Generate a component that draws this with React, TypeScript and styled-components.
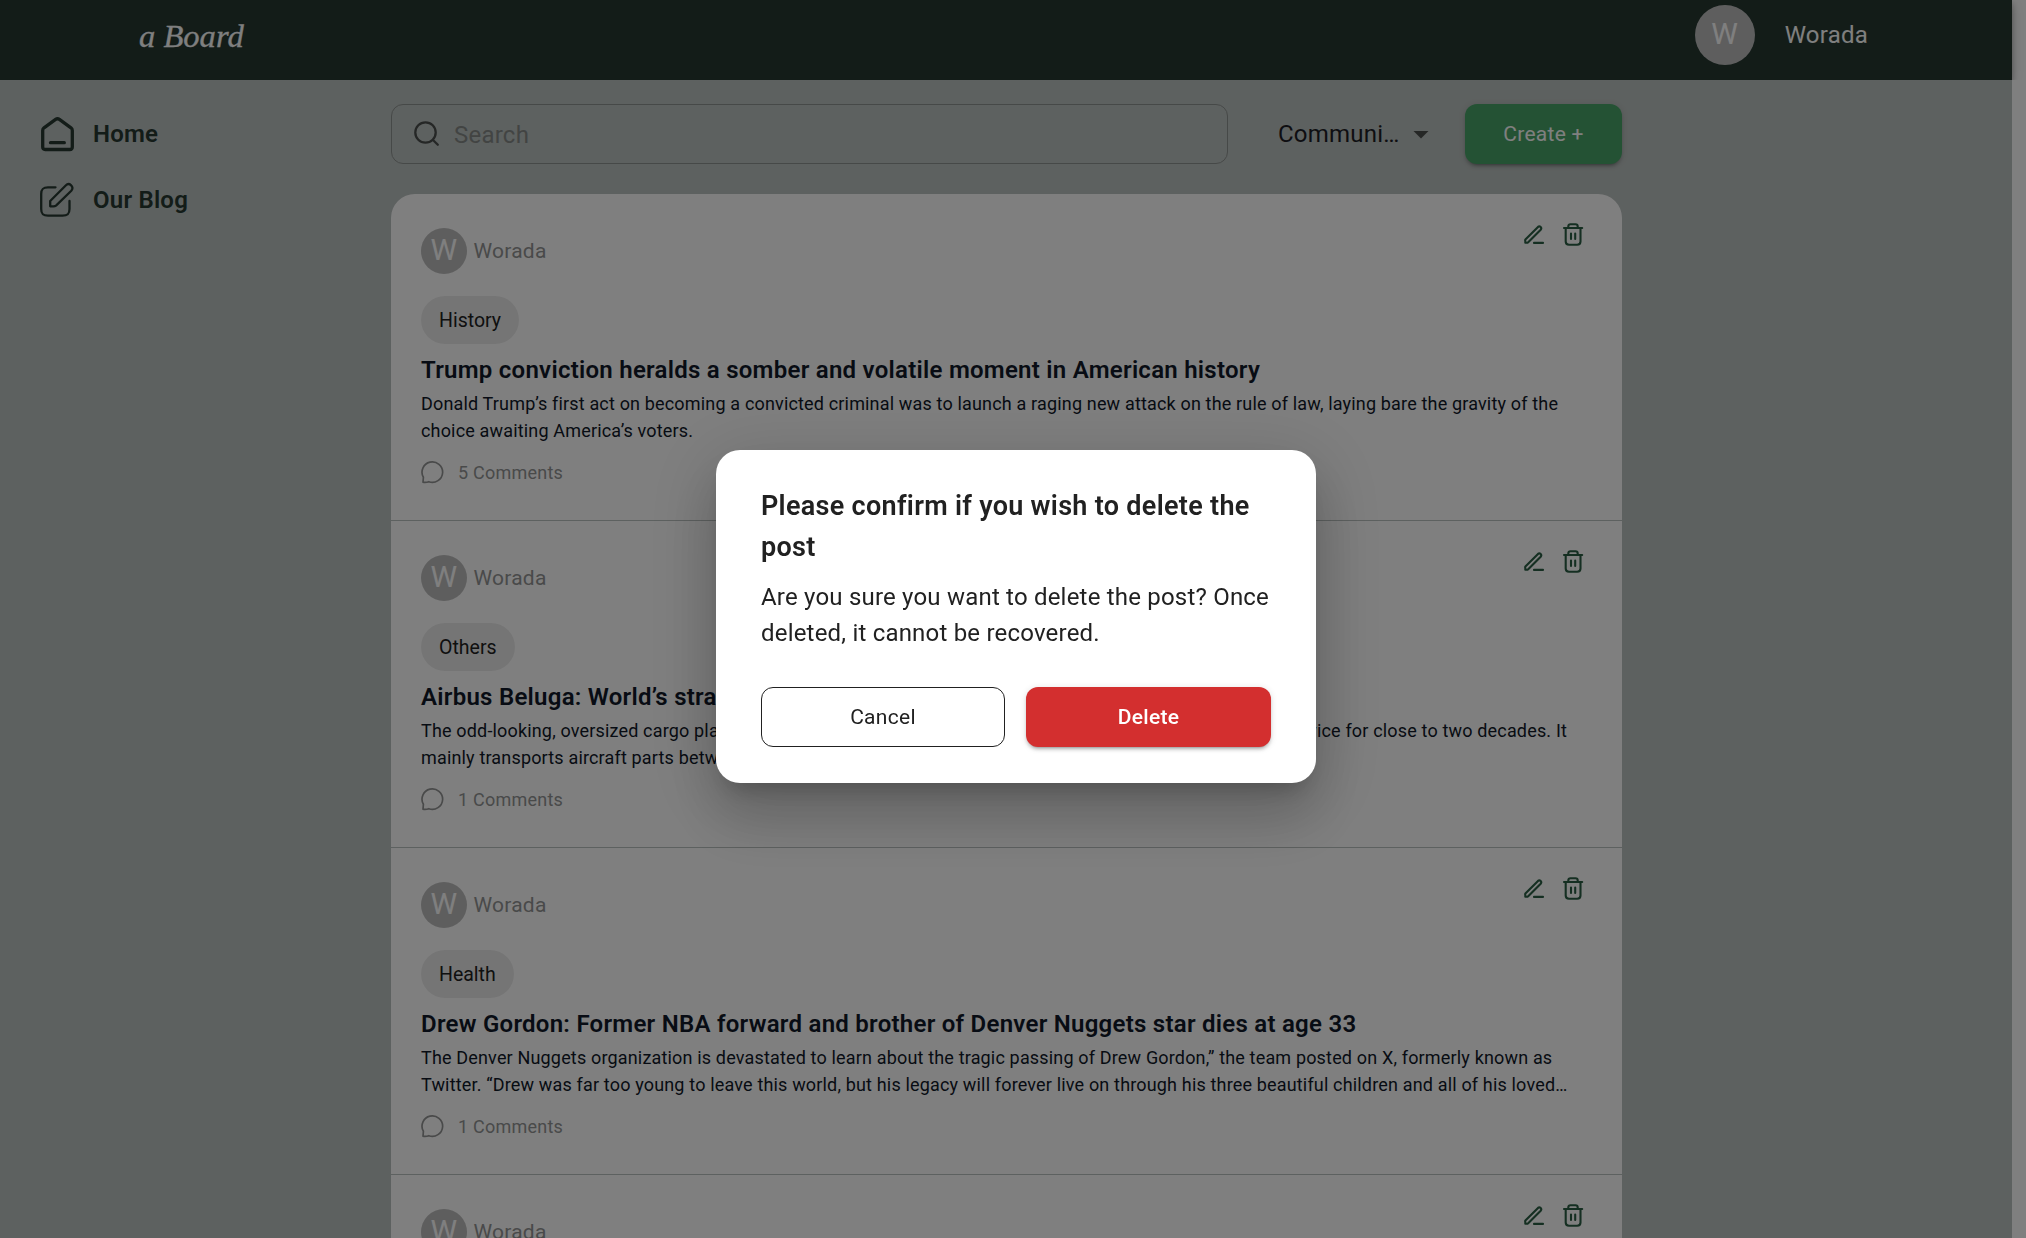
import React from "react";
import styled, { createGlobalStyle } from "styled-components";

const GlobalStyle = createGlobalStyle`
  *, *::before, *::after { box-sizing: border-box; }
  body {
    margin: 0;
    height: 1238px;
    overflow: hidden;
    background: #fff;
    font-family: Roboto, "Liberation Sans", sans-serif;
    font-size: 24px;
    line-height: 1.5;
    letter-spacing: 0.00938em;
  }
  h1, h2, p { margin: 0; }
  svg { display: block; flex: none; }
`;

const Page = styled.div`
  width: 2012px;
  height: 1238px;
  background: #bbc2c0;
`;

const Header = styled.header`
  height: 80px;
  padding: 0 144px 10px 139px;
  display: flex;
  align-items: center;
  justify-content: space-between;
  background: #263831;
  color: #fff;
  box-shadow: 0 3px 6px rgba(0, 0, 0, 0.2), 0 6px 8px rgba(0, 0, 0, 0.14), 0 2px 15px rgba(0, 0, 0, 0.12);
  clip-path: inset(0 -20px 0 0);
`;

const Logo = styled.span`
  padding-top: 2px;
  font-family: "Liberation Serif", serif;
  font-style: italic;
  font-size: 32.6px;
  line-height: 40px;
  letter-spacing: 0;
  -webkit-text-stroke: 0.3px currentColor;
`;

const Account = styled.div`
  display: flex;
  align-items: center;
  gap: 30px;
`;

const Avatar = styled.span<{ $size: number }>`
  width: ${(p) => p.$size}px;
  height: ${(p) => p.$size}px;
  padding-bottom: 2px;
  border-radius: 50%;
  display: flex;
  align-items: center;
  justify-content: center;
  flex: none;
  background: #bdbdbd;
  color: #fff;
  font-size: 30px;
  line-height: 1;
`;

const Body = styled.div`
  display: grid;
  grid-template-columns: 391px 1231px;
  height: 1158px;
  overflow: hidden;
`;

const Nav = styled.nav`
  padding: 36px 0 0 39px;
  display: flex;
  flex-direction: column;
  gap: 30px;
`;

const NavItem = styled.a`
  display: flex;
  align-items: center;
  gap: 18px;
  height: 36px;
  color: #263831;
  font-weight: 600;
`;

const Main = styled.main`
  padding-top: 24px;
`;

const Toolbar = styled.div`
  display: flex;
  align-items: center;
  height: 60px;
  margin-bottom: 30px;
`;

const SearchBox = styled.div`
  width: 837px;
  height: 60px;
  border: 1px solid #8d9290;
  border-radius: 12px;
  padding-left: 21px;
  display: flex;
  align-items: center;
  gap: 13px;
  color: #858987;

  span { padding-top: 1px; }
`;

const Select = styled.div`
  width: 237px;
  padding-left: 50px;
  display: flex;
  align-items: center;
  color: #1d1d25;
`;

const SelectLabel = styled.span`
  width: 125px;
`;

const CreateButton = styled.button`
  width: 157px;
  height: 60px;
  border: 0;
  border-radius: 12px;
  background: #49a569;
  color: #fff;
  font: 450 21px/36px Roboto, sans-serif;
  letter-spacing: 0.25px;
  box-shadow: 0 4px 2px -3px rgba(0, 0, 0, 0.2), 0 3px 3px rgba(0, 0, 0, 0.14), 0 1px 7px rgba(0, 0, 0, 0.12);
`;

const PostList = styled.section`
  background: #fff;
  border-radius: 24px 24px 0 0;
  overflow: hidden;
`;

const Post = styled.article`
  height: 327px;
  padding: 33px 30px 0;
  border-bottom: 1px solid #bbc2c0;
`;

const PostTop = styled.div`
  display: flex;
  justify-content: space-between;
  height: 47px;
`;

const Author = styled.div`
  display: flex;
  align-items: center;
  gap: 6.5px;
  color: #939494;
  font-size: 21px;
`;

const AuthorName = styled.span`
  padding-top: 2px;
`;

const Actions = styled.div`
  display: flex;
  gap: 15px;
  height: 24px;
  margin: -5px 7px 0 0;
`;

const Chip = styled.span`
  display: inline-flex;
  align-items: center;
  height: 48px;
  margin-top: 22px;
  padding: 2px 18px 0 18px;
  border-radius: 24px;
  background: #ebebeb;
  color: #212121;
  font-size: 19.5px;
  letter-spacing: 0;
  vertical-align: top;
`;

const Title = styled.h2`
  margin-top: 8px;
  color: #101828;
  font-size: 24px;
  line-height: 36px;
  font-weight: 600;
  letter-spacing: 0.26px;
`;

const Excerpt = styled.p`
  margin: 2px 22px 0 0;
  color: #101828;
  font-size: 18px;
  line-height: 27px;
  letter-spacing: 0.165px;
  display: -webkit-box;
  -webkit-line-clamp: 2;
  -webkit-box-orient: vertical;
  overflow: hidden;
`;

const Comments = styled.div`
  display: flex;
  align-items: center;
  gap: 13px;
  margin-top: 13px;
  height: 30px;
  color: #939494;
  font-size: 18px;
`;

const Backdrop = styled.div`
  position: fixed;
  inset: 0;
  display: flex;
  align-items: flex-start;
  justify-content: center;
  padding: 450px 0 0 6px;
  background: rgba(0, 0, 0, 0.5);
`;

const Dialog = styled.div`
  width: 600px;
  height: 333px;
  padding: 36px 45px 0;
  border-radius: 24px;
  background: #fff;
  color: #212121;
  box-shadow: 0 16px 22px -10px rgba(0, 0, 0, 0.2), 0 36px 57px 4px rgba(0, 0, 0, 0.14), 0 13px 69px 12px rgba(0, 0, 0, 0.12);
`;

const DialogTitle = styled.h1`
  font-size: 27px;
  line-height: 41px;
  font-weight: 600;
  letter-spacing: 0.3px;
`;

const DialogText = styled.p`
  margin: 11px 0 36px;
  font-size: 24px;
  line-height: 36px;
  letter-spacing: 0.2px;
`;

const DialogActions = styled.div`
  display: grid;
  grid-template-columns: 244px 245px;
  gap: 21px;
`;

const DialogButton = styled.button<{ $danger?: boolean }>`
  height: 60px;
  border-radius: 12px;
  border: ${(p) => (p.$danger ? "0" : "1px solid #212121")};
  background: ${(p) => (p.$danger ? "#d32f2f" : "#fff")};
  color: ${(p) => (p.$danger ? "#fff" : "#212121")};
  font: ${(p) => (p.$danger ? 500 : 400)} 21px/36px Roboto, sans-serif;
  letter-spacing: 0.3px;
  box-shadow: ${(p) =>
    p.$danger
      ? "0 4px 2px -3px rgba(0,0,0,.2), 0 3px 3px rgba(0,0,0,.14), 0 1px 7px rgba(0,0,0,.12)"
      : "none"};
`;

const line = {
  fill: "none",
  stroke: "currentColor",
  strokeLinecap: "round" as const,
  strokeLinejoin: "round" as const,
};

const HomeIcon = () => (
  <svg width="36" height="36" viewBox="0 0 36 36" {...line} strokeWidth="3.3">
    <path d="M3.7 14.4 Q3.7 12.8 5 11.8 L16.6 3.4 Q18.5 2 20.4 3.4 L32 11.8 Q33.3 12.8 33.3 14.4 V31 Q33.3 33.5 30.8 33.5 H6.2 Q3.7 33.5 3.7 31 Z" />
    <path d="M11.5 26.7 H25.3" />
  </svg>
);

const BlogIcon = () => (
  <svg width="36" height="36" viewBox="0 0 36 36" {...line} strokeWidth="2.3">
    <path d="M16.5 5.3 H9 C4 5.3 2.2 7 2.2 12 V27 C2.2 32 4 33.7 9 33.7 H23.5 C28.5 33.7 30.5 32 30.5 27 V19" />
    <path d="M11.2 19 L26.7 3.5 C28.3 1.9 30.3 1.7 31.9 3.1 C33.9 4.8 33.9 7 32.3 8.7 L17 23.6 Q16 24.3 14.5 24.3 H11.2 V19 Z" />
  </svg>
);

const SearchIcon = () => (
  <svg width="28" height="28" viewBox="0 0 28 28" {...line} stroke="#4a4e4d" strokeWidth="2.3">
    <circle cx="12.5" cy="12.5" r="10.2" />
    <path d="M20 20 L24.8 24.8" />
  </svg>
);

const CaretIcon = () => (
  <svg width="36" height="36" viewBox="0 0 24 24" fill="#4a4e4d">
    <path d="M7 10l5 5 5-5z" />
  </svg>
);

const PenIcon = () => (
  <svg width="24" height="24" viewBox="0 0 24 24" {...line} stroke="#2b5f44" strokeWidth="2.1">
    <path d="M3.4 17.5 L16 4.9 Q17.3 3.8 18.6 4.9 Q19.9 6.3 18.7 7.7 L6.2 20.2 Q5.6 20.8 4.8 20.8 H3.3 V19 Q3 18 3.4 17.5 Z" />
    <path d="M12 20.9 H21" />
  </svg>
);

const TrashIcon = () => (
  <svg width="24" height="24" viewBox="0 0 24 24" {...line} stroke="#2b5f44" strokeWidth="2.1">
    <path d="M3 6 H21.2 M7.3 6 V4.5 Q7.3 2.3 9.5 2.3 H14.5 Q16.7 2.3 16.7 4.5 V6" />
    <path d="M4.7 6 V19.5 Q4.7 22.7 8 22.7 H16.2 Q19.5 22.7 19.5 19.5 V6" />
    <path d="M10 11.6 V17 M14.2 11.6 V17" />
  </svg>
);

const CommentIcon = () => (
  <svg width="24" height="24" viewBox="0 0 24 24" {...line} strokeWidth="1.7">
    <path d="M2 22.2 L2.4 17.2 A10.3 10.2 0 1 1 7.8 21.7 Q5 22.7 2 22.2 Z" />
  </svg>
);

const posts = [
  {
    tag: "History",
    title: "Trump conviction heralds a somber and volatile moment in American history",
    text: "Donald Trump’s first act on becoming a convicted criminal was to launch a raging new attack on the rule of law, laying bare the gravity of the choice awaiting America’s voters.",
    comments: 5,
  },
  {
    tag: "Others",
    title: "Airbus Beluga: World’s strangest-looking plane",
    text: "The odd-looking, oversized cargo plane, christened Beluga because of the whale-like features, has been in service for close to two decades. It mainly transports aircraft parts between Airbus sites.",
    comments: 1,
  },
  {
    tag: "Health",
    title: "Drew Gordon: Former NBA forward and brother of Denver Nuggets star dies at age 33",
    text: "The Denver Nuggets organization is devastated to learn about the tragic passing of Drew Gordon,” the team posted on X, formerly known as Twitter. “Drew was far too young to leave this world, but his legacy will forever live on through his three beautiful children and all of his loved ones and the many friends he made.",
    comments: 1,
  },
  { tag: "", title: "", text: "", comments: 0 },
];

export default function App() {
  return (
    <>
      <GlobalStyle />
      <Page>
        <Header>
          <Logo>a Board</Logo>
          <Account>
            <Avatar $size={60}>W</Avatar>
            <span>Worada</span>
          </Account>
        </Header>
        <Body>
          <Nav>
            <NavItem><HomeIcon />Home</NavItem>
            <NavItem><BlogIcon />Our Blog</NavItem>
          </Nav>
          <Main>
            <Toolbar>
              <SearchBox><SearchIcon /><span>Search</span></SearchBox>
              <Select><SelectLabel>Communi…</SelectLabel><CaretIcon /></Select>
              <CreateButton>Create +</CreateButton>
            </Toolbar>
            <PostList>
              {posts.map((p, i) => (
                <Post key={i}>
                  <PostTop>
                    <Author><Avatar $size={46}>W</Avatar><AuthorName>Worada</AuthorName></Author>
                    <Actions><PenIcon /><TrashIcon /></Actions>
                  </PostTop>
                  {p.title && (
                    <>
                      <Chip>{p.tag}</Chip>
                      <Title>{p.title}</Title>
                      <Excerpt>{p.text}</Excerpt>
                      <Comments><CommentIcon /><span>{p.comments} Comments</span></Comments>
                    </>
                  )}
                </Post>
              ))}
            </PostList>
          </Main>
        </Body>
      </Page>
      <Backdrop>
        <Dialog role="dialog">
          <DialogTitle>Please confirm if you wish to delete the post</DialogTitle>
          <DialogText>Are you sure you want to delete the post? Once deleted, it cannot be recovered.</DialogText>
          <DialogActions>
            <DialogButton>Cancel</DialogButton>
            <DialogButton $danger>Delete</DialogButton>
          </DialogActions>
        </Dialog>
      </Backdrop>
    </>
  );
}
